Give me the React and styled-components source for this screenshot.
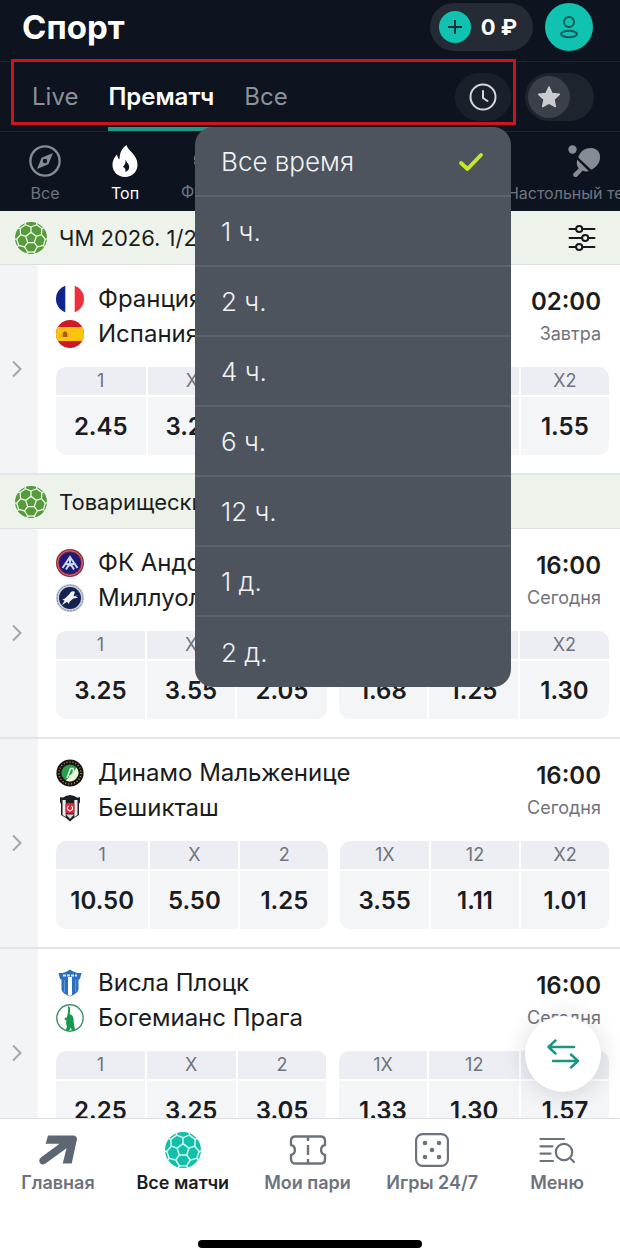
import React, { useState } from "react";
import styled, { createGlobalStyle } from "styled-components";

const timeOptions = [
  "Все время",
  "1 ч.",
  "2 ч.",
  "4 ч.",
  "6 ч.",
  "12 ч.",
  "1 д.",
  "2 д.",
];

const tabs = ["Live", "Прематч", "Все"];

// --- Icons ---

const polar = (r, deg) => {
  const a = (deg * Math.PI) / 180;
  return `${(16 + r * Math.cos(a)).toFixed(2)} ${(16 + r * Math.sin(a)).toFixed(2)}`;
};

const corners = [-90, -18, 54, 126, 198];

const BallIcon = ({ size, color, seam }) => (
  <svg width={size} height={size} viewBox="0 0 32 32" aria-hidden="true">
    <circle cx="16" cy="16" r="16" fill={color} />
    <g fill="none" stroke={seam} strokeWidth="1.300" strokeLinejoin="round">
      <path d={`M${corners.map((a) => polar(5.6, a)).join("L")}Z`} />
      {corners.map((a) => (
        <g key={a}>
          <path d={`M${polar(5.6, a)}L${polar(11, a)}`} />
          <path
            d={`M${polar(17, a - 20)}L${polar(14.4, a - 23)}L${polar(11, a)}L${polar(14.4, a + 23)}L${polar(17, a + 20)}`}
          />
          <path d={`M${polar(14.4, a + 23)}L${polar(14.4, a + 49)}`} />
        </g>
      ))}
    </g>
  </svg>
);

const CompassIcon = () => (
  <svg width="34" height="34" viewBox="0 0 34 34" fill="none" aria-hidden="true">
    <circle cx="17" cy="17" r="14.6" stroke="#868b94" strokeWidth="2.4" />
    <path d="M25 9l-4.600 11.200L9 25l4.600-11.200z" fill="#868b94" />
    <circle cx="17" cy="17" r="2.200" fill="#0d131f" />
  </svg>
);

const FlameIcon = () => (
  <svg width="34" height="34" viewBox="0 0 34 34" aria-hidden="true">
    <path
      d="M18.500 1c1 5.500 11 9.500 11 19.500C29.500 28 24 33 17 33S4.500 28 4.500 21c0-5 2.300-8 4.500-10.500.4 2.500 1.200 4 2.500 5C11.500 9 14 4 18.500 1z"
      fill="#fff"
    />
    <path
      d="M17.600 15.500c.8 3 3.600 4.400 3.600 7.700 0 2.300-1.500 4-4.200 4.800 1.500-2.200-.3-4-2-5.200 2-2 2.800-4.400 2.600-7.300z"
      fill="#0d131f"
    />
  </svg>
);

const FootballIcon = () => (
  <BallIcon size={32} color="#868b94" seam="#0d131f" />
);

const RacketIcon = () => (
  <svg width="34" height="34" viewBox="0 0 34 34" aria-hidden="true">
    <g fill="#868b94">
      <circle cx="5.500" cy="5.500" r="4.200" />
      <path d="M11.500 12.300C14 6 19.500 3.400 25 4c5.500.7 8.800 5 8 10.500-.6 5-3.700 8-7.600 10.800-.8.5-1.500.4-2-.2L11.800 14c-.5-.5-.6-1-.3-1.700z" />
      <path d="M10.300 15.700l11.400 11.200c-2.200 1-4.500.5-6-.4l-5.200 5.700c-1 1.100-2.600 1.100-3.600.2-1-1-1-2.400 0-3.400l4.800-4.600c-2-2.300-2.500-5.900-1.400-8.700z" />
    </g>
  </svg>
);

const ClockIcon = () => (
  <svg width="28" height="28" viewBox="0 0 28 28" fill="none" aria-hidden="true">
    <circle cx="14" cy="14" r="12.500" stroke="#d5d7db" strokeWidth="2" />
    <path d="M14 8v7l4.500 3" stroke="#d5d7db" strokeWidth="2" strokeLinecap="round" strokeLinejoin="round" />
  </svg>
);

const StarIcon = () => (
  <svg width="26" height="26" viewBox="0 0 26 26" aria-hidden="true">
    <path
      d="M13 3l3 6.500 7.200.9-5.300 4.900 1.400 7.200L13 19l-6.300 3.500 1.400-7.200-5.300-4.900L10 9.500z"
      fill="#c9cbcf"
      stroke="#c9cbcf"
      strokeWidth="1.600"
      strokeLinejoin="round"
    />
  </svg>
);

const UserIcon = () => (
  <svg width="20" height="24" viewBox="0 0 20 24" fill="none" stroke="#165a5c" strokeWidth="2" aria-hidden="true">
    <circle cx="10" cy="7" r="5" />
    <ellipse cx="10" cy="19" rx="8" ry="3.200" />
  </svg>
);

const PlusIcon = () => (
  <svg width="16" height="16" viewBox="0 0 16 16" stroke="#10303a" strokeWidth="2" aria-hidden="true">
    <path d="M8 1v14M1 8h14" />
  </svg>
);

const CheckIcon = () => (
  <svg width="26" height="20" viewBox="0 0 26 20" fill="none" aria-hidden="true">
    <path d="M3 11l6.500 6L23 3" stroke="#c5ea25" strokeWidth="3.800" strokeLinecap="round" strokeLinejoin="round" />
  </svg>
);

const SlidersIcon = () => (
  <svg width="28" height="28" viewBox="0 0 28 28" fill="none" stroke="#14171c" strokeWidth="2" strokeLinecap="round" aria-hidden="true">
    <path d="M1.500 5H8M14.500 5h12M1.500 14H14M20.500 14h6M1.500 23H8M14.500 23h12" />
    <circle cx="11.200" cy="5" r="3.100" />
    <circle cx="17.200" cy="14" r="3.100" />
    <circle cx="11.200" cy="23" r="3.100" />
  </svg>
);

const ChevronIcon = () => (
  <svg width="10" height="18" viewBox="0 0 10 18" fill="none" aria-hidden="true">
    <path d="M1 1.500L8.500 9 1 16.500" stroke="#a3a6ab" strokeWidth="2" />
  </svg>
);

const SwapIcon = () => (
  <svg width="34" height="30" viewBox="0 0 34 30" fill="none" stroke="#1c9484" strokeWidth="2.400" strokeLinecap="round" strokeLinejoin="round" aria-hidden="true">
    <path d="M28 8H2.500M9.500 1.500L2.500 8l7 6.500" />
    <path d="M7 22h25M25 15.500l7 6.500-7 6.500" />
  </svg>
);

const ArrowIcon = () => (
  <svg width="40" height="36" viewBox="0 0 40 36" aria-hidden="true">
    <path
      d="M10 3.500h24.500c3.400 0 5 1.700 4.300 4.600L33.700 31.500h-9l3.800-15.300L7.500 31.600c-1.800 1.300-4.200 1-5.500-.7s-.9-4.100.9-5.400L21.500 11.800H7.700z"
      fill="#5d6673"
    />
  </svg>
);

const TicketIcon = () => (
  <svg width="38" height="36" viewBox="0 0 38 36" fill="none" stroke="#6d737c" strokeWidth="2.400" strokeLinejoin="round" aria-hidden="true">
    <path d="M6.500 4.500h25c2.700 0 4.500 1.700 4.500 4.300v4.200c-2.600.6-3.900 2.400-3.900 5s1.300 4.400 3.900 5v4.200c0 2.600-1.800 4.300-4.500 4.300h-25C3.800 31.500 2 29.800 2 27.200V23c2.600-.6 3.900-2.400 3.900-5S4.600 13.600 2 13V8.800c0-2.600 1.800-4.300 4.500-4.300z" />
    <path d="M19 4.500v4.500M19 13v10M19 27v4.500" />
  </svg>
);

const DiceIcon = () => (
  <svg width="36" height="36" viewBox="0 0 36 36" aria-hidden="true">
    <rect x="2.100" y="2.100" width="31.800" height="31.800" rx="6.500" fill="none" stroke="#6d737c" strokeWidth="2.200" />
    {[[11, 11], [25, 11], [18, 18], [11, 25], [25, 25]].map(([x, y]) => (
      <circle key={`${x}-${y}`} cx={x} cy={y} r="2.300" fill="#6d737c" />
    ))}
  </svg>
);

const MenuIcon = () => (
  <svg width="36" height="36" viewBox="0 0 36 36" fill="none" stroke="#6d737c" strokeWidth="2.200" strokeLinecap="round" aria-hidden="true">
    <path d="M1.500 7H25M1.500 14.300H13.500M1.500 21.600H11.500M1.500 29H14" />
    <circle cx="25" cy="20" r="8.200" />
    <path d="M31 26l4 4" />
  </svg>
);

// --- Team crests ---

const crests = {
  france: (
    <g clipPath="url(#crestRound)">
      <path d="M0 0h28v28H0z" fill="#fff" />
      <path d="M0 0h9.300v28H0z" fill="#10248f" />
      <path d="M18.700 0H28v28h-9.300z" fill="#ee2f3c" />
    </g>
  ),
  spain: (
    <g clipPath="url(#crestRound)">
      <path d="M0 0h28v28H0z" fill="#d01822" />
      <path d="M0 7h28v14H0z" fill="#fdc40b" />
      <path d="M7 12.500l2-1.500 2 1.500V17H7z" fill="#a8571a" />
      <path d="M6 13v4M12 13v4" stroke="#c9862a" />
    </g>
  ),
  andorra: (
    <g>
      <circle cx="14" cy="14" r="14" fill="#8f2745" />
      <circle cx="14" cy="14" r="12.400" fill="none" stroke="#d7795a" />
      <circle cx="14" cy="14" r="10.800" fill="#1d1a78" />
      <path d="M6.500 19L14 8l7.500 11M10 20.500l4-6.500 4 6.500M10 14.500l4 2 4-2M14 8v5" fill="none" stroke="#cfd8ee" strokeWidth="2" />
    </g>
  ),
  millwall: (
    <g>
      <circle cx="14" cy="14" r="14" fill="#c9d0de" />
      <circle cx="14" cy="14" r="12.900" fill="none" stroke="#7b86a5" strokeDasharray="2 1" />
      <circle cx="14" cy="14" r="11" fill="#14224f" />
      <path d="M22 11.500l-4.500.8 1.500-4.500c-2.300-1.200-4.600-.4-5.300 2l-4.500 4.400-2.900 1.600 2.200.6-2.500 4.800 5-3.400 1.800 2.200 1-2.600 3.600-2.800 4.800-.8-2.600-1z" fill="#eef1f7" />
    </g>
  ),
  dynamo: (
    <g>
      <circle cx="14" cy="14" r="13.600" fill="#17130f" />
      <circle cx="14" cy="14" r="11" fill="none" stroke="#a89155" strokeWidth="1.600" strokeDasharray="1 2" />
      <circle cx="14" cy="14" r="8.600" fill="#2f9a52" />
      <path d="M20.500 8.500A8.600 8.600 0 0 1 10 21.500L17 14z" fill="#f4f2d8" />
      <path d="M11 19l3.500-9.500h2.500c1.800 3.500-.5 7-4 8" fill="none" stroke="#d4efd9" strokeWidth="1.600" />
    </g>
  ),
  besiktas: (
    <g>
      <path d="M4 3c2 1 4 .5 5.500-1L14 1l4.500 1C20 3.500 22 4 24 3v5l-1 2v11l-5 3-4 3.500L10 24l-5-3V10L4 8z" fill="#1c1d20" />
      <path d="M6.500 6h3.200v17l-3.200-2zM18.300 6h3.200v15l-3.200 2z" fill="#e9eaec" />
      <rect x="9.500" y="9" width="9" height="10.500" rx="2" fill="#df2436" />
      <path d="M12.600 12a2.600 2.600 0 1 0 2.800 0" fill="none" stroke="#fff" strokeWidth="1.200" />
      <path d="M10 20.500h8l-4 4.500z" fill="#d6d8dc" />
    </g>
  ),
  wisla: (
    <g>
      <path d="M2.500 4c3.500.5 7-.5 11.500-3.500C18.500 3.500 22 4.500 25.500 4L24 10l-1.500.5V20c0 3-4 5.500-8.500 7.500C9.500 25.500 5.500 23 5.500 20v-9.500L4 10z" fill="#2b6fbe" />
      <path d="M12 8h4v18l-2 1-2-1z" fill="#fff" />
      <path d="M7 6.500h14" stroke="#dce9f7" strokeWidth="2" strokeDasharray="3 1" />
      <path d="M8.500 11v12M19.500 11v12" stroke="#5b97dc" />
    </g>
  ),
  bohemians: (
    <g>
      <circle cx="14" cy="14" r="13.200" fill="#fff" stroke="#3f8f68" strokeWidth="1.400" />
      <path d="M12 2c1.500.5 2.300 1.500 2 3l-.2 5c3 1 4.200 4 3.700 7l.8 5.500 1 4h-3.500l-1-3-2 3.500H9.500l1.500-4.500c-1-2-1.200-4-.5-6l-2-1 .5-2 1.500.5 1.200-4 .5-5z" fill="#139a4e" />
    </g>
  ),
};

const Crest = ({ name }) => (
  <svg width="28" height="28" viewBox="0 0 28 28" aria-hidden="true">
    <defs>
      <clipPath id="crestRound">
        <circle cx="14" cy="14" r="14" />
      </clipPath>
    </defs>
    {crests[name]}
  </svg>
);

// --- Data ---

const sports = [
  { name: "Все", icon: <CompassIcon /> },
  { name: "Топ", icon: <FlameIcon />, active: true },
  { name: "Футбол", icon: <FootballIcon /> },
  { name: "Настольный теннис", icon: <RacketIcon />, last: true },
];

const leagues = [
  {
    title: "ЧМ 2026. 1/2",
    filter: true,
    matches: [
      {
        teams: [["Франция", "france"], ["Испания", "spain"]],
        time: "02:00",
        day: "Завтра",
        odds: ["2.45", "3.20", "3.10", "1.40", "1.37", "1.55"],
      },
    ],
  },
  {
    title: "Товарищеские",
    matches: [
      {
        teams: [["ФК Андорра", "andorra"], ["Миллуолл", "millwall"]],
        time: "16:00",
        day: "Сегодня",
        odds: ["3.25", "3.55", "2.05", "1.68", "1.25", "1.30"],
      },
      {
        teams: [["Динамо Мальженице", "dynamo"], ["Бешикташ", "besiktas"]],
        time: "16:00",
        day: "Сегодня",
        odds: ["10.50", "5.50", "1.25", "3.55", "1.11", "1.01"],
      },
      {
        teams: [["Висла Плоцк", "wisla"], ["Богемианс Прага", "bohemians"]],
        time: "16:00",
        day: "Сегодня",
        odds: ["2.25", "3.25", "3.05", "1.33", "1.30", "1.57"],
      },
    ],
  },
];

const outcomes = ["1", "X", "2", "1X", "12", "X2"];

const navItems = [
  { name: "Главная", icon: <ArrowIcon /> },
  { name: "Все матчи", icon: <BallIcon size={36} color="#12bfa8" seam="#d9fbf4" />, active: true },
  { name: "Мои пари", icon: <TicketIcon /> },
  { name: "Игры 24/7", icon: <DiceIcon /> },
  { name: "Меню", icon: <MenuIcon /> },
];

const OddsBlock = ({ odds, from }) => (
  <OddsGroup>
    {odds.slice(from, from + 3).map((value, i) => (
      <Odd key={outcomes[from + i]} type="button">
        <OddName>{outcomes[from + i]}</OddName>
        <OddValue>{value}</OddValue>
      </Odd>
    ))}
  </OddsGroup>
);

const Match = ({ match }) => (
  <MatchRow>
    <Expand type="button" aria-label="Подробнее">
      <ChevronIcon />
    </Expand>
    <MatchBody>
      <MatchTop>
        <div>
          {match.teams.map(([name, crest]) => (
            <Team key={name}>
              <Crest name={crest} />
              {name}
            </Team>
          ))}
        </div>
        <Kickoff>
          <strong>{match.time}</strong>
          <span>{match.day}</span>
        </Kickoff>
      </MatchTop>
      <Odds>
        <OddsBlock odds={match.odds} from={0} />
        <OddsBlock odds={match.odds} from={3} />
      </Odds>
    </MatchBody>
  </MatchRow>
);

const App = () => {
  const [tab, setTab] = useState("Прематч");
  const [period, setPeriod] = useState("Все время");
  const [open, setOpen] = useState(true);

  return (
    <Screen>
      <GlobalStyle />
      <Header>
        <h1>Спорт</h1>
        <Wallet type="button">
          <PlusCircle>
            <PlusIcon />
          </PlusCircle>
          0 ₽
        </Wallet>
        <Avatar type="button" aria-label="Профиль">
          <UserIcon />
        </Avatar>
      </Header>

      <TabsRow>
        <TabGroup>
          {tabs.map((name) => (
            <Tab key={name} type="button" $active={name === tab} onClick={() => setTab(name)}>
              {name}
            </Tab>
          ))}
          <TimeFilter>
            <ClockButton type="button" aria-label="Время" aria-expanded={open} onClick={() => setOpen(!open)}>
              <ClockIcon />
            </ClockButton>
            {open && (
              <TimeMenu>
                {timeOptions.map((name) => (
                  <li key={name}>
                    <TimeOption type="button" onClick={() => setPeriod(name)}>
                      {name}
                      {name === period && <CheckIcon />}
                    </TimeOption>
                  </li>
                ))}
              </TimeMenu>
            )}
          </TimeFilter>
          <Frame />
        </TabGroup>
        <FavSwitch>
          <input type="checkbox" aria-label="Избранное" />
          <Knob>
            <StarIcon />
          </Knob>
        </FavSwitch>
      </TabsRow>

      <Sports>
        {sports.map((sport) => (
          <Sport key={sport.name} type="button" $active={sport.active} $last={sport.last}>
            {sport.icon}
            <span>{sport.name}</span>
          </Sport>
        ))}
      </Sports>

      <Feed>
        <FeedScroll>
          {leagues.map((league) => (
            <section key={league.title}>
              <League>
                <BallIcon size={32} color="#559b3a" seam="#eef4ea" />
                <h2>{league.title}</h2>
                {league.filter && (
                  <FilterButton type="button" aria-label="Фильтры">
                    <SlidersIcon />
                  </FilterButton>
                )}
              </League>
              {league.matches.map((match) => (
                <Match key={match.teams[0][0]} match={match} />
              ))}
            </section>
          ))}
        </FeedScroll>
        <SwapButton type="button" aria-label="Сменить вид">
          <SwapIcon />
        </SwapButton>
      </Feed>

      <BottomNav>
        <NavItems>
          {navItems.map((item) => (
            <NavLink key={item.name} href="#" $active={item.active}>
              {item.icon}
              <span>{item.name}</span>
            </NavLink>
          ))}
        </NavItems>
        <HomeBar />
      </BottomNav>
    </Screen>
  );
};

export default App;

// --- Styled Components ---

const GlobalStyle = createGlobalStyle`
  * {
    box-sizing: border-box;
  }

  body {
    margin: 0;
    font-family: "Inter", "Noto Sans", sans-serif;
    color: #1a1c20;
    background: #fff;
  }

  h1, h2, ul {
    margin: 0;
    padding: 0;
  }

  button {
    border: 0;
    padding: 0;
    background: none;
    color: inherit;
    font: inherit;
    cursor: pointer;
  }

  svg {
    display: block;
    flex-shrink: 0;
  }
`;

const Screen = styled.div`
  display: flex;
  flex-direction: column;
  height: 100vh;
`;

const Header = styled.header`
  display: flex;
  align-items: center;
  gap: 12px;
  height: 62px;
  padding: 0 27px 7px 22px;
  background: #0d131f;
  border-bottom: 1px solid #1c2430;
  color: #fff;

  h1 {
    flex: 1;
    font-size: 33px;
    line-height: 40px;
    font-weight: 700;
  }
`;

const Wallet = styled.button`
  display: flex;
  align-items: center;
  gap: 10px;
  height: 48px;
  padding: 0 16px 0 9px;
  border-radius: 24px;
  background: #252b35;
  font-size: 22px;
  font-weight: 700;
`;

const PlusCircle = styled.span`
  display: flex;
  align-items: center;
  justify-content: center;
  width: 32px;
  height: 32px;
  border-radius: 50%;
  background: #0fc3b0;
`;

const Avatar = styled.button`
  display: flex;
  align-items: center;
  justify-content: center;
  width: 48px;
  height: 48px;
  border-radius: 50%;
  background: #0fc3b0;
`;

const TabsRow = styled.div`
  display: flex;
  align-items: center;
  gap: 9px;
  height: 70px;
  padding: 0 26px 0 11px;
  background: #0d131f;
  border-bottom: 1px solid #1c2430;
`;

const TabGroup = styled.div`
  position: relative;
  display: flex;
  align-items: center;
  flex: 1;
  gap: 30px;
  height: 100%;
  padding: 0 5px 0 21px;
`;

const Tab = styled.button`
  height: 100%;
  padding-top: 4px;
  border-bottom: 4px solid transparent;
  font-size: 24px;
  color: ${({ $active }) => ($active ? "#fff" : "#8b9099")};
  font-weight: ${({ $active }) => ($active ? 600 : 400)};
  border-color: ${({ $active }) => ($active ? "#269686" : "transparent")};
`;

const Frame = styled.div`
  position: absolute;
  inset: -3px 0 6px;
  border: 3px solid #c9151b;
  pointer-events: none;
`;

const TimeFilter = styled.div`
  position: relative;
  margin-left: auto;
`;

const ClockButton = styled.button`
  display: flex;
  align-items: center;
  justify-content: center;
  width: 56px;
  height: 48px;
  border-radius: 24px;
  background: #1a202b;
`;

const TimeMenu = styled.ul`
  position: absolute;
  z-index: 10;
  top: calc(100% + 6px);
  right: 0;
  width: 316px;
  list-style: none;
  background: #4e545e;
  border-radius: 18px;
  overflow: hidden;

  li {
    height: 70px;
    border-bottom: 2px solid #5d646e;
  }

  li:last-child {
    border-bottom: 0;
  }
`;

const TimeOption = styled.button`
  display: flex;
  align-items: center;
  justify-content: space-between;
  width: 100%;
  height: 100%;
  padding: 2px 27px 0 26px;
  font-size: 26px;
  font-weight: 300;
  color: #f1f2f4;
`;

const FavSwitch = styled.label`
  position: relative;
  display: flex;
  align-items: center;
  width: 69px;
  height: 48px;
  padding: 3px;
  border-radius: 24px;
  background: #1e242e;

  input {
    position: absolute;
    inset: 0;
    width: 100%;
    height: 100%;
    margin: 0;
    opacity: 0;
  }
`;

const Knob = styled.span`
  display: flex;
  align-items: center;
  justify-content: center;
  width: 42px;
  height: 42px;
  border-radius: 50%;
  background: #3a3f49;
`;

const Sports = styled.nav`
  display: flex;
  gap: 8px;
  height: 79px;
  padding-left: 9px;
  background: #0d131f;
  overflow: hidden;
`;

const Sport = styled.button`
  display: flex;
  flex-direction: column;
  align-items: center;
  justify-content: flex-start;
  gap: 4px;
  flex-shrink: 0;
  min-width: 72px;
  width: ${({ $last }) => ($last ? "72px" : "auto")};
  padding: 12px ${({ $last }) => ($last ? 0 : 12)}px 0;
  margin-left: ${({ $last }) => ($last ? "auto" : "0")};
  font-size: 16px;
  line-height: 22px;
  white-space: nowrap;
  color: ${({ $active }) => ($active ? "#fff" : "#6f757f")};
`;

const Feed = styled.main`
  position: relative;
  flex: 1;
  min-height: 0;
`;

const FeedScroll = styled.div`
  height: 100%;
  overflow-x: hidden;
  overflow-y: auto;
  scrollbar-width: none;
`;

const League = styled.header`
  display: flex;
  align-items: center;
  gap: 12px;
  height: 54px;
  padding: 0 24px 0 15px;
  background: #edf3ea;
  border-bottom: 1px solid #dbe1e0;

  h2 {
    flex: 1;
    font-size: 22px;
    font-weight: 400;
  }
`;

const FilterButton = styled.button`
  display: flex;
`;

const MatchRow = styled.article`
  display: flex;
  height: 210px;
  border-bottom: 2px solid #e3e5e9;
`;

const Expand = styled.button`
  display: flex;
  align-items: center;
  flex: 0 0 38px;
  padding-left: 12px;
  background: #f3f4f6;
`;

const MatchBody = styled.div`
  flex: 1;
  min-width: 0;
  padding: 16px 11px 0 18px;
`;

const MatchTop = styled.div`
  display: flex;
  justify-content: space-between;
  margin-bottom: 16px;
  padding-right: 8px;
`;

const Team = styled.div`
  display: flex;
  align-items: center;
  gap: 14px;
  height: 35px;
  font-size: 24px;
`;

const Kickoff = styled.div`
  display: flex;
  flex-direction: column;
  align-items: flex-end;
  padding-top: 4px;

  strong {
    font-size: 24px;
    line-height: 34px;
    font-weight: 600;
  }

  span {
    font-size: 18px;
    line-height: 30px;
    color: #6f747b;
  }
`;

const Odds = styled.div`
  display: flex;
  gap: 12px;
`;

const OddsGroup = styled.div`
  display: flex;
  flex: 1 0 auto;
  gap: 2px;
  border-radius: 10px;
  overflow: hidden;
`;

const Odd = styled.button`
  display: flex;
  flex-direction: column;
  flex: 1 0 auto;
  gap: 2px;
  min-width: 88px;
`;

const OddName = styled.span`
  width: 100%;
  line-height: 28px;
  font-size: 18px;
  color: #6f747b;
  background: #eceef3;
`;

const OddValue = styled.span`
  width: 100%;
  padding: 2px 14px 0;
  line-height: 56px;
  font-size: 24px;
  font-weight: 600;
  background: #f4f5f7;
`;

const SwapButton = styled.button`
  position: absolute;
  right: 19px;
  bottom: 26px;
  display: flex;
  align-items: center;
  justify-content: center;
  width: 76px;
  height: 76px;
  border-radius: 50%;
  background: #fff;
  box-shadow: 0 2px 24px rgba(30, 30, 60, 0.16);
`;

const BottomNav = styled.footer`
  display: flex;
  flex-direction: column;
  align-items: center;
  justify-content: space-between;
  height: 140px;
  padding: 13px 0 10px;
  border-top: 1px solid #dcdee1;
  background: #fff;
`;

const NavItems = styled.nav`
  display: flex;
  justify-content: space-between;
  width: 100%;
  padding: 0 15px 0 10px;
`;

const NavLink = styled.a`
  display: flex;
  flex-direction: column;
  align-items: center;
  gap: 4px;
  width: 96px;
  font-size: 18px;
  line-height: 22px;
  font-weight: 600;
  white-space: nowrap;
  text-decoration: none;
  color: ${({ $active }) => ($active ? "#1a1c20" : "#6d737c")};
`;

const HomeBar = styled.div`
  width: 36%;
  height: 8px;
  border-radius: 4px;
  background: #000;
`;
